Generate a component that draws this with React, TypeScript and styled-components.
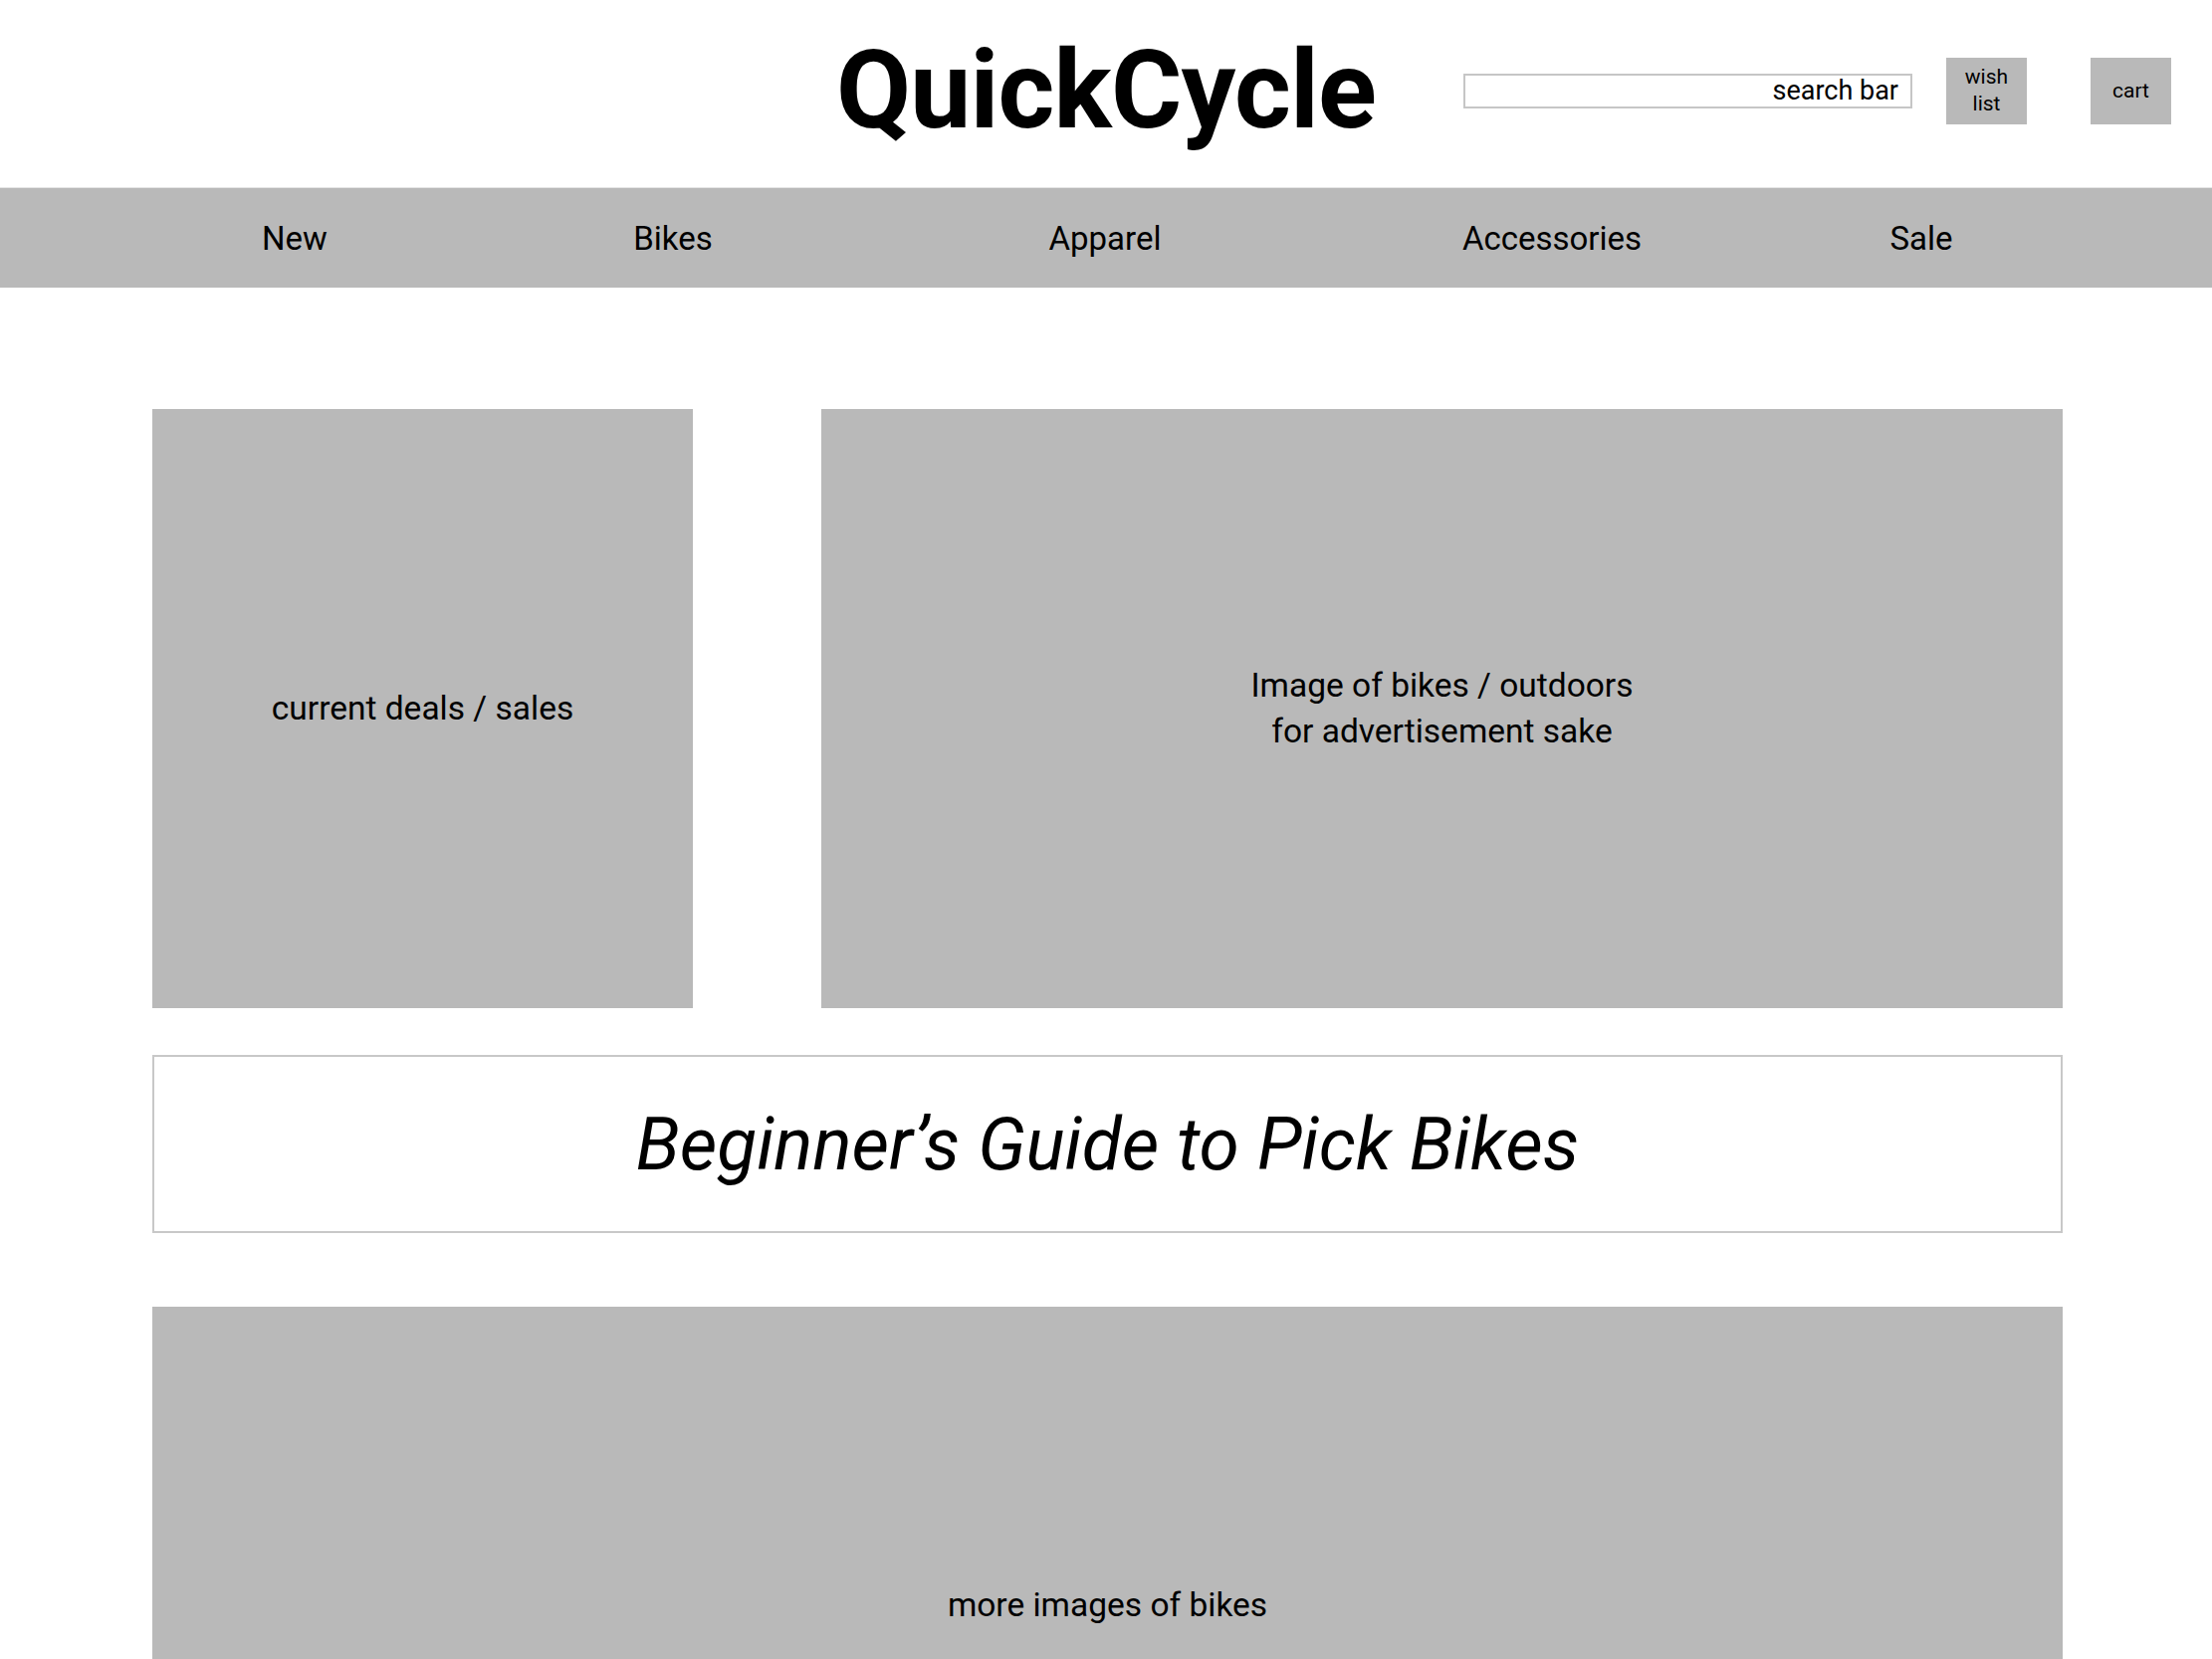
import React from "react";
import styled, { createGlobalStyle } from "styled-components";

const GlobalStyle = createGlobalStyle`
  body {
    margin: 0;
    background: #ffffff;
    font-family: Roboto, "Liberation Sans", sans-serif;
    color: #000000;
  }
`;

const Page = styled.div`
  width: 2222px;
`;

const Header = styled.header`
  display: grid;
  grid-template-columns: 1fr auto 1fr;
  align-items: center;
  height: 188px;
  padding-bottom: 6px;
  box-sizing: border-box;
`;

const Logo = styled.h1`
  grid-column: 2;
  margin: 0;
  font-size: 109px;
  font-weight: 700;
  line-height: 1;
  letter-spacing: -0.8px;
`;

const Tools = styled.div`
  grid-column: 3;
  display: flex;
  align-items: center;
  justify-content: flex-end;
  padding-right: 41px;
`;

const SearchBar = styled.div`
  width: 451px;
  height: 35px;
  box-sizing: border-box;
  border: 2px solid #c6c6c6;
  display: flex;
  align-items: center;
  justify-content: flex-end;
  padding-right: 12px;
  font-size: 27px;
  margin-right: 34px;
`;

const ToolButton = styled.div<{ $gap?: number }>`
  width: 81px;
  height: 67px;
  background: #b9b9b9;
  display: flex;
  align-items: center;
  justify-content: center;
  text-align: center;
  font-size: 21px;
  line-height: 27px;
  margin-right: ${(p) => p.$gap ?? 0}px;
`;

const Nav = styled.nav`
  display: grid;
  grid-template-columns: 380px 380px 488px 410px 332px;
  padding-left: 106px;
  height: 100px;
  align-items: center;
  background: #b9b9b9;
  border-top: 1px solid #e6e6e6;
`;

const NavItem = styled.div`
  text-align: center;
  font-size: 33px;
`;

const Content = styled.main`
  padding: 122px 150px 0 153px;
  display: flex;
  flex-direction: column;
`;

const TopRow = styled.div`
  display: grid;
  grid-template-columns: 543px 1fr;
  gap: 129px;
  height: 602px;
`;

const Placeholder = styled.div<{ $height?: number }>`
  background: #b9b9b9;
  display: flex;
  align-items: center;
  justify-content: center;
  text-align: center;
  font-size: 33.5px;
  line-height: 46px;
  ${(p) => (p.$height ? `height: ${p.$height}px;` : "")}
`;

const GuideBox = styled.div`
  margin-top: 47px;
  height: 179px;
  box-sizing: border-box;
  border: 2px solid #c8c8c8;
  display: flex;
  align-items: center;
  justify-content: center;
  font-size: 73px;
  font-style: italic;
`;

const Gallery = styled(Placeholder)`
  margin-top: 74px;
`;

const navItems = ["New", "Bikes", "Apparel", "Accessories", "Sale"];

const App = () => {
  return (
    <Page>
      <GlobalStyle />
      <Header>
        <Logo>QuickCycle</Logo>
        <Tools>
          <SearchBar>search bar</SearchBar>
          <ToolButton $gap={64}>
            wish
            <br />
            list
          </ToolButton>
          <ToolButton>cart</ToolButton>
        </Tools>
      </Header>
      <Nav>
        {navItems.map((item) => (
          <NavItem key={item}>{item}</NavItem>
        ))}
      </Nav>
      <Content>
        <TopRow>
          <Placeholder>current deals / sales</Placeholder>
          <Placeholder>
            Image of bikes / outdoors
            <br />
            for advertisement sake
          </Placeholder>
        </TopRow>
        <GuideBox>Beginner’s Guide to Pick Bikes</GuideBox>
        <Gallery $height={600}>more images of bikes</Gallery>
      </Content>
    </Page>
  );
};

export default App;
